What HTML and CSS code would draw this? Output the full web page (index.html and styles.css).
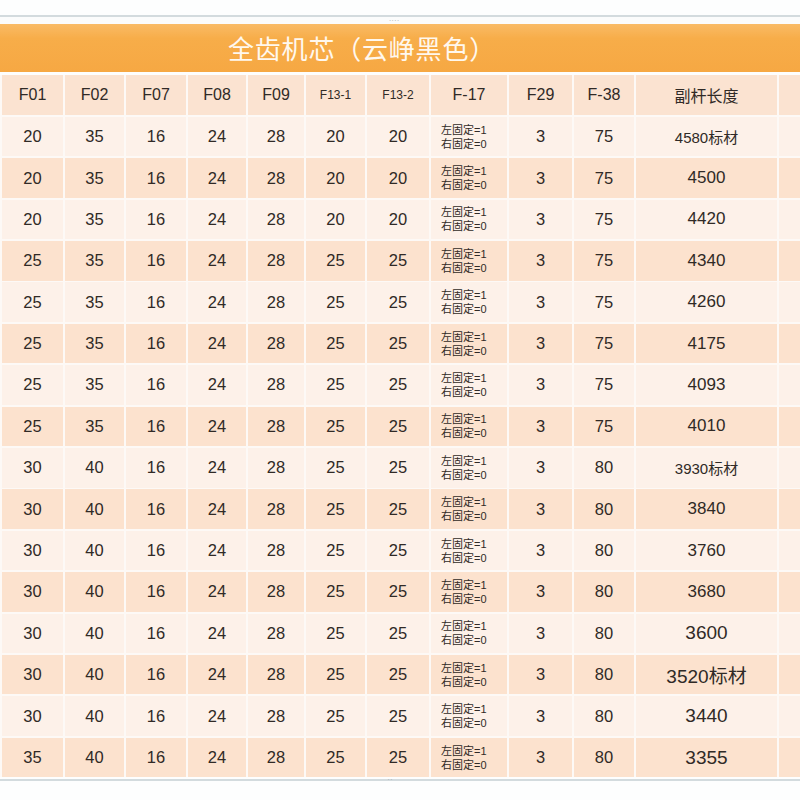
FILE: index.html
```html
<!DOCTYPE html>
<html lang="zh">
<head>
<meta charset="utf-8">
<title>全齿机芯（云峥黑色）</title>
<link rel="stylesheet" href="styles.css">
</head>
<body>
<div class="page">
  <div class="top"></div>
  <div class="rule"></div>
  <div class="strip"><span class="dots">····</span></div>
  <div class="banner"><h1 class="title">全齿机芯（云峥黑色）</h1></div>
  <div class="grid">
    <div class="c h">F01</div><div class="c h">F02</div><div class="c h">F07</div><div class="c h">F08</div><div class="c h">F09</div><div class="c h sm">F13-1</div><div class="c h sm">F13-2</div><div class="c h">F-17</div><div class="c h">F29</div><div class="c h">F-38</div><div class="c h cn">副杆长度</div><div class="c h"></div>

    <div class="c a">20</div><div class="c a">35</div><div class="c a">16</div><div class="c a">24</div><div class="c a">28</div><div class="c a">20</div><div class="c a">20</div><div class="c a fx"><span>左固定=1</span><span>右固定=0</span></div><div class="c a">3</div><div class="c a">75</div><div class="c a len std">4580标材</div><div class="c a"></div>
    <div class="c b">20</div><div class="c b">35</div><div class="c b">16</div><div class="c b">24</div><div class="c b">28</div><div class="c b">20</div><div class="c b">20</div><div class="c b fx"><span>左固定=1</span><span>右固定=0</span></div><div class="c b">3</div><div class="c b">75</div><div class="c b len">4500</div><div class="c b"></div>
    <div class="c a">20</div><div class="c a">35</div><div class="c a">16</div><div class="c a">24</div><div class="c a">28</div><div class="c a">20</div><div class="c a">20</div><div class="c a fx"><span>左固定=1</span><span>右固定=0</span></div><div class="c a">3</div><div class="c a">75</div><div class="c a len">4420</div><div class="c a"></div>
    <div class="c b">25</div><div class="c b">35</div><div class="c b">16</div><div class="c b">24</div><div class="c b">28</div><div class="c b">25</div><div class="c b">25</div><div class="c b fx"><span>左固定=1</span><span>右固定=0</span></div><div class="c b">3</div><div class="c b">75</div><div class="c b len">4340</div><div class="c b"></div>
    <div class="c a">25</div><div class="c a">35</div><div class="c a">16</div><div class="c a">24</div><div class="c a">28</div><div class="c a">25</div><div class="c a">25</div><div class="c a fx"><span>左固定=1</span><span>右固定=0</span></div><div class="c a">3</div><div class="c a">75</div><div class="c a len">4260</div><div class="c a"></div>
    <div class="c b">25</div><div class="c b">35</div><div class="c b">16</div><div class="c b">24</div><div class="c b">28</div><div class="c b">25</div><div class="c b">25</div><div class="c b fx"><span>左固定=1</span><span>右固定=0</span></div><div class="c b">3</div><div class="c b">75</div><div class="c b len">4175</div><div class="c b"></div>
    <div class="c a">25</div><div class="c a">35</div><div class="c a">16</div><div class="c a">24</div><div class="c a">28</div><div class="c a">25</div><div class="c a">25</div><div class="c a fx"><span>左固定=1</span><span>右固定=0</span></div><div class="c a">3</div><div class="c a">75</div><div class="c a len">4093</div><div class="c a"></div>
    <div class="c b">25</div><div class="c b">35</div><div class="c b">16</div><div class="c b">24</div><div class="c b">28</div><div class="c b">25</div><div class="c b">25</div><div class="c b fx"><span>左固定=1</span><span>右固定=0</span></div><div class="c b">3</div><div class="c b">75</div><div class="c b len">4010</div><div class="c b"></div>
    <div class="c a">30</div><div class="c a">40</div><div class="c a">16</div><div class="c a">24</div><div class="c a">28</div><div class="c a">25</div><div class="c a">25</div><div class="c a fx"><span>左固定=1</span><span>右固定=0</span></div><div class="c a">3</div><div class="c a">80</div><div class="c a len std">3930标材</div><div class="c a"></div>
    <div class="c b">30</div><div class="c b">40</div><div class="c b">16</div><div class="c b">24</div><div class="c b">28</div><div class="c b">25</div><div class="c b">25</div><div class="c b fx"><span>左固定=1</span><span>右固定=0</span></div><div class="c b">3</div><div class="c b">80</div><div class="c b len">3840</div><div class="c b"></div>
    <div class="c a">30</div><div class="c a">40</div><div class="c a">16</div><div class="c a">24</div><div class="c a">28</div><div class="c a">25</div><div class="c a">25</div><div class="c a fx"><span>左固定=1</span><span>右固定=0</span></div><div class="c a">3</div><div class="c a">80</div><div class="c a len">3760</div><div class="c a"></div>
    <div class="c b">30</div><div class="c b">40</div><div class="c b">16</div><div class="c b">24</div><div class="c b">28</div><div class="c b">25</div><div class="c b">25</div><div class="c b fx"><span>左固定=1</span><span>右固定=0</span></div><div class="c b">3</div><div class="c b">80</div><div class="c b len">3680</div><div class="c b"></div>
    <div class="c a">30</div><div class="c a">40</div><div class="c a">16</div><div class="c a">24</div><div class="c a">28</div><div class="c a">25</div><div class="c a">25</div><div class="c a fx"><span>左固定=1</span><span>右固定=0</span></div><div class="c a">3</div><div class="c a">80</div><div class="c a len big">3600</div><div class="c a"></div>
    <div class="c b">30</div><div class="c b">40</div><div class="c b">16</div><div class="c b">24</div><div class="c b">28</div><div class="c b">25</div><div class="c b">25</div><div class="c b fx"><span>左固定=1</span><span>右固定=0</span></div><div class="c b">3</div><div class="c b">80</div><div class="c b len big">3520标材</div><div class="c b"></div>
    <div class="c a">30</div><div class="c a">40</div><div class="c a">16</div><div class="c a">24</div><div class="c a">28</div><div class="c a">25</div><div class="c a">25</div><div class="c a fx"><span>左固定=1</span><span>右固定=0</span></div><div class="c a">3</div><div class="c a">80</div><div class="c a len big">3440</div><div class="c a"></div>
    <div class="c b">35</div><div class="c b">40</div><div class="c b">16</div><div class="c b">24</div><div class="c b">28</div><div class="c b">25</div><div class="c b">25</div><div class="c b fx"><span>左固定=1</span><span>右固定=0</span></div><div class="c b">3</div><div class="c b">80</div><div class="c b len big">3355</div><div class="c b"></div>
  </div>
  <div class="rule bottom"><span class="dots">··</span></div>
  <div class="foot"></div>
</div>
</body>
</html>
```

FILE: styles.css
```css
* { box-sizing: border-box; }
html, body { margin: 0; padding: 0; background: #ffffff; }
.page {
  width: 800px;
  height: 800px;
  overflow: hidden;
  background: #fdfefe;
  font-family: "Liberation Sans", Arial, "Noto Sans CJK SC", sans-serif;
  color: #302a26;
}
.top { height: 15px; background: #fdfefe; }
.rule { height: 2px; background: #d3dbde; }
.strip {
  height: 7px;
  background: #fbfcfc;
  display: flex;
  justify-content: center;
  align-items: center;
}
.dots {
  font-size: 8px;
  line-height: 6px;
  color: #a8b0b4;
  margin-left: -12px;
}
.banner {
  height: 48px;
  background: linear-gradient(#f9bb66, #f7ad49 30%, #f6a843);
  display: flex;
  align-items: center;
  justify-content: center;
  padding-right: 76px;
}
.title {
  margin: 0;
  font-family: "Noto Sans CJK SC", sans-serif;
  font-weight: 400;
  font-size: 26px;
  line-height: 1;
  color: #fff8ee;
  letter-spacing: 0.8px;
}
.grid {
  margin-top: 3px;
  display: grid;
  grid-template-columns: 61px 59px 60px 58px 56px 59px 62px 76px 63px 60px 141px 21px;
  grid-template-rows: 40px;
  grid-auto-rows: 39.5px;
  column-gap: 2px;
  row-gap: 1.9px;
  padding-left: 2px;
  background: #fdf9f6;
}
.c {
  display: flex;
  align-items: center;
  justify-content: center;
  font-size: 16.5px;
  white-space: nowrap;
  overflow: hidden;
}
.h { background: #fbe3d1; font-size: 16px; }
.h.sm { font-size: 12px; }
.h.cn { font-family: "Noto Sans CJK SC", sans-serif; font-size: 16px; }
.a { background: #fdf1e9; }
.b { background: #fce2ce; }
.len { font-size: 17px; }
.len.std { font-size: 15px; }
.len.big { font-size: 19px; }
.fx {
  flex-direction: column;
  align-items: flex-start;
  justify-content: center;
  padding-left: 10px;
  font-family: "Liberation Sans", "Noto Sans CJK SC", sans-serif;
  font-size: 11px;
  line-height: 14px;
}
.fx span { display: block; height: 14px; line-height: 14px; }
.bottom {
  margin-top: 2px;
  display: flex;
  justify-content: center;
  align-items: center;
}
.bottom .dots { margin-left: -20px; }
.foot { height: 40px; background: #fdfefe; }
```
